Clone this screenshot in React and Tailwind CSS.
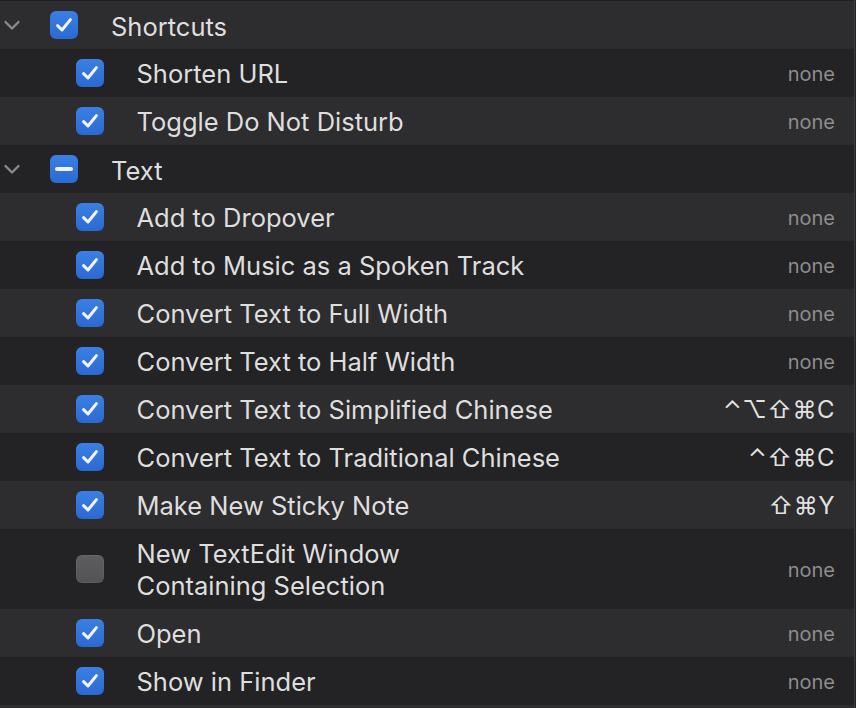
import React from "react";

const LIGHT = "bg-[#2d2c2e]";
const DARK = "bg-[#232224]";

function Check({ state }) {
  if (state === "off") {
    return (
      <div className="w-[28px] h-[28px] rounded-[6px] bg-gradient-to-b from-[#5e5d5f] to-[#535254] shadow-[inset_0_0_0_1px_rgba(255,255,255,0.06)] shrink-0" />
    );
  }
  return (
    <div className="w-[28px] h-[28px] rounded-[6px] bg-gradient-to-b from-[#3c80e4] to-[#2a69d2] flex items-center justify-center shrink-0">
      {state === "mixed" ? (
        <div className="w-[18px] h-[4px] rounded-full bg-[#eef3fb]" />
      ) : (
        <svg width="20" height="20" viewBox="0 0 20 20">
          <path
            d="M3.6 10.6 L8 15 L16.4 4.6"
            fill="none"
            stroke="#f2f6fc"
            strokeWidth="3"
            strokeLinecap="round"
            strokeLinejoin="round"
          />
        </svg>
      )}
    </div>
  );
}

function Chevron() {
  return (
    <svg width="18" height="12" viewBox="0 0 18 12" className="shrink-0">
      <path
        d="M2.5 3 L9 9.5 L15.5 3"
        fill="none"
        stroke="#8a898b"
        strokeWidth="2.4"
        strokeLinecap="round"
        strokeLinejoin="round"
      />
    </svg>
  );
}

function GroupRow({ label, state, bg }) {
  return (
    <div className={`${bg} h-[48px] flex items-center`}>
      <div className="w-[50px] pl-[3px] flex items-center">
        <Chevron />
      </div>
      <Check state={state} />
      <div className="ml-[33px] pt-[3px] text-[25.5px] text-[#dfdedf] leading-none">{label}</div>
    </div>
  );
}

function ItemRow({ label, lines, shortcut, state, bg }) {
  const tall = !!lines;
  return (
    <div className={`${bg} ${tall ? "h-[80px]" : "h-[48px]"} flex items-center pr-[19px]`}>
      <div className="w-[76px]" />
      <Check state={state} />
      <div className="ml-[32.5px] pt-[2px] flex-1 text-[25.5px] text-[#dfdedf] leading-[32px]">
        {tall ? (
          <>
            <div>{lines[0]}</div>
            <div>{lines[1]}</div>
          </>
        ) : (
          label
        )}
      </div>
      {shortcut ? (
        <div className="pt-[2px] text-[24px] text-[#e2e1e2] leading-none tracking-[0.5px] font-['Inter','DejaVu_Sans',sans-serif]">
          {shortcut}
        </div>
      ) : (
        <div className="pt-[2px] text-[20px] text-[#8e8d8f] leading-none">none</div>
      )}
    </div>
  );
}

export default function App() {
  return (
    <div className="w-[856px] h-[708px] bg-[#2d2c2e] overflow-hidden font-['Inter','Noto_Sans',sans-serif] flex">
      <div className="w-[854px] flex flex-col">
        <div className="h-[1px] bg-[#1f1e20]" />
        <GroupRow label="Shortcuts" state="on" bg={LIGHT} />
        <ItemRow label="Shorten URL" state="on" bg={DARK} />
        <ItemRow label="Toggle Do Not Disturb" state="on" bg={LIGHT} />
        <GroupRow label="Text" state="mixed" bg={DARK} />
        <ItemRow label="Add to Dropover" state="on" bg={LIGHT} />
        <ItemRow label="Add to Music as a Spoken Track" state="on" bg={DARK} />
        <ItemRow label="Convert Text to Full Width" state="on" bg={LIGHT} />
        <ItemRow label="Convert Text to Half Width" state="on" bg={DARK} />
        <ItemRow label="Convert Text to Simplified Chinese" shortcut="⌃⌥⇧⌘C" state="on" bg={LIGHT} />
        <ItemRow label="Convert Text to Traditional Chinese" shortcut="⌃⇧⌘C" state="on" bg={DARK} />
        <ItemRow label="Make New Sticky Note" shortcut="⇧⌘Y" state="on" bg={LIGHT} />
        <ItemRow lines={["New TextEdit Window", "Containing Selection"]} state="off" bg={DARK} />
        <ItemRow label="Open" state="on" bg={LIGHT} />
        <ItemRow label="Show in Finder" state="on" bg={DARK} />
        <div className="flex-1 bg-[#2d2c2e]" />
      </div>
      <div className="w-[1px] bg-[#3d3c3e]" />
      <div className="w-[1px] bg-[#242325]" />
    </div>
  );
}
